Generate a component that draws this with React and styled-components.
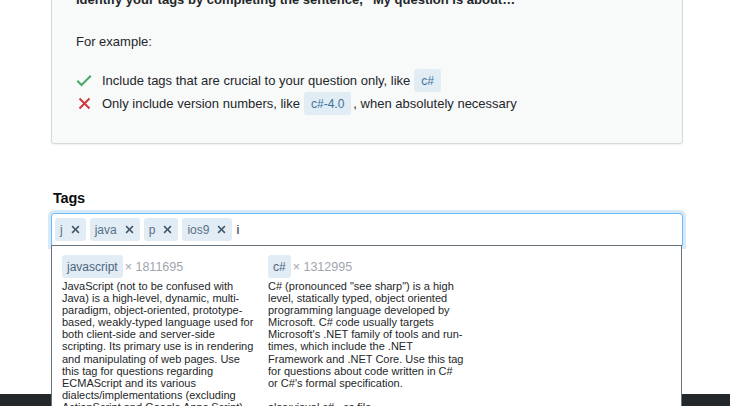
import React from 'react';
import styled, { createGlobalStyle } from 'styled-components';

const GlobalStyle = createGlobalStyle`
  html, body {
    margin: 0;
    padding: 0;
    background: #fff;
    overflow: hidden;
  }
  body {
    font-family: "Liberation Sans", Arial, sans-serif;
    color: #242729;
  }
`;

const inputTags = ['j', 'java', 'p', 'ios9'];

const suggestions = [
  {
    name: 'javascript',
    count: '1811695',
    text: 'JavaScript (not to be confused with Java) is a high-level, dynamic, multi-paradigm, object-oriented, prototype-based, weakly-typed language used for both client-side and server-side scripting. Its primary use is in rendering and manipulating of web pages. Use this tag for questions regarding ECMAScript and its various dialects/implementations (excluding ActionScript and Google Apps Script).',
  },
  {
    name: 'c#',
    count: '1312995',
    text: 'C# (pronounced "see sharp") is a high level, statically typed, object oriented programming language developed by Microsoft. C# code usually targets Microsoft\'s .NET family of tools and run-times, which include the .NET Framework and .NET Core. Use this tag for questions about code written in C# or C#\'s formal specification.\n\nalso:visual c#, .cs file',
  },
];

function ClearIcon() {
  return (
    <svg width="11" height="11" viewBox="0 0 14 14" fill="currentColor">
      <path d="M12 3.41L10.59 2 7 5.59 3.41 2 2 3.41 5.59 7 2 10.59 3.41 12 7 8.41 10.59 12 12 10.59 8.41 7z" />
    </svg>
  );
}

function CheckIcon() {
  return (
    <svg width="16" height="13" viewBox="0 0 16 13" fill="none">
      <path d="M1.3 6.8l4.2 4.2L14.8 1.7" stroke="#48a868" strokeWidth="2" />
    </svg>
  );
}

function CrossIcon() {
  return (
    <svg width="13" height="13" viewBox="0 0 13 13" fill="none">
      <path d="M1.5 1.5l10 10M11.5 1.5l-10 10" stroke="#d1383d" strokeWidth="2" />
    </svg>
  );
}

function App() {
  return (
    <>
      <GlobalStyle />
      <Page>
        <Notice>
          <Lead>Identify your tags by completing the sentence, “My question is about…”</Lead>
          <Para>For example:</Para>
          <Rules>
            <Rule>
              <RuleIcon>
                <CheckIcon />
              </RuleIcon>
              Include tags that are crucial to your question only, like
              <PostTag>c#</PostTag>
            </Rule>
            <Rule>
              <RuleIcon>
                <CrossIcon />
              </RuleIcon>
              Only include version numbers, like
              <PostTag>c#-4.0</PostTag>, when absolutely necessary
            </Rule>
          </Rules>
        </Notice>

        <Field>
          <Label>Tags</Label>
          <TagInput>
            {inputTags.map((t) => (
              <InputTag key={t}>
                {t}
                <ClearBtn>
                  <ClearIcon />
                </ClearBtn>
              </InputTag>
            ))}
            <Typed>i</Typed>
            <Dropdown>
              {suggestions.map((s) => (
                <Suggestion key={s.name}>
                  <SuggestionHead>
                    <SuggestTag>{s.name}</SuggestTag>
                    <Count>× {s.count}</Count>
                  </SuggestionHead>
                  <Excerpt>{s.text}</Excerpt>
                </Suggestion>
              ))}
            </Dropdown>
          </TagInput>
        </Field>
      </Page>
      <Footer />
    </>
  );
}

const Page = styled.div`
  width: 632px;
  margin-left: 51px;
`;

const Notice = styled.div`
  margin-top: -26px;
  padding: 16px 24px 28px;
  background: #f8f9f9;
  border: 1px solid #d6d9dc;
  border-radius: 3px;
  box-shadow: 0 1px 2px rgba(0, 0, 0, 0.06);
`;

const Lead = styled.p`
  margin: 0 0 25px;
  font-size: 13px;
  line-height: 17px;
  font-weight: bold;
`;

const Para = styled.p`
  margin: 0 0 19px;
  font-size: 13px;
  line-height: 17px;
`;

const Rules = styled.ul`
  margin: 0;
  padding: 0;
  list-style: none;
`;

const Rule = styled.li`
  display: flex;
  align-items: center;
  height: 23px;
  font-size: 13px;
  white-space: pre;
`;

const RuleIcon = styled.span`
  display: flex;
  justify-content: center;
  width: 16px;
  margin-right: 10px;
`;

const PostTag = styled.span`
  display: inline-flex;
  align-items: center;
  height: 23px;
  padding: 0 7px;
  margin: 0 2px 0 4px;
  background: #e1ecf4;
  color: #39739d;
  border-radius: 3px;
  font-size: 12px;
`;

const Field = styled.div`
  margin-top: 45px;
`;

const Label = styled.label`
  display: block;
  margin: 0 0 6px 2px;
  font-size: 14.5px;
  line-height: 18px;
  font-weight: bold;
  color: #0c0d0e;
  letter-spacing: -0.2px;
`;

const TagInput = styled.div`
  position: relative;
  display: flex;
  align-items: center;
  gap: 4px;
  height: 33px;
  box-sizing: border-box;
  padding: 0 3px;
  border: 1px solid #6bbbf7;
  border-radius: 3px 3px 0 0;
  box-shadow: 0 0 0 3px #d7e9fb;
  background: #fff;
`;

const InputTag = styled.span`
  display: inline-flex;
  align-items: center;
  gap: 7px;
  height: 23px;
  padding: 0 5px;
  background: #e1ecf4;
  color: #5a7088;
  border-radius: 3px;
  font-size: 12px;
`;

const ClearBtn = styled.span`
  display: flex;
  color: #3e5469;
`;

const Typed = styled.span`
  margin-left: 0;
  font-size: 13px;
  color: #2f1f44;
`;

const Dropdown = styled.div`
  position: absolute;
  z-index: 5;
  top: 31px;
  left: -1px;
  right: 0;
  display: grid;
  grid-template-columns: repeat(3, 206px);
  padding: 9px 5px 20px;
  background: #fff;
  border: 1px solid #6a737c;
  border-bottom: none;
`;

const Suggestion = styled.div`
  padding: 0 5px;
`;

const SuggestionHead = styled.div`
  display: flex;
  align-items: center;
  gap: 2px;
  margin-bottom: 2px;
`;

const SuggestTag = styled.span`
  display: inline-flex;
  align-items: center;
  height: 23px;
  padding: 0 5px;
  background: #e1ecf4;
  color: #4d6680;
  border-radius: 3px;
  font-size: 12px;
`;

const Count = styled.span`
  color: #9fa6ad;
  font-size: 12.5px;
`;

const Excerpt = styled.p`
  margin: 0;
  width: 196px;
  font-size: 11px;
  line-height: 12.1px;
  color: #242729;
  white-space: pre-line;
`;

const Footer = styled.footer`
  height: 60px;
  margin-top: 148px;
  background: #242729;
`;

export default App;
